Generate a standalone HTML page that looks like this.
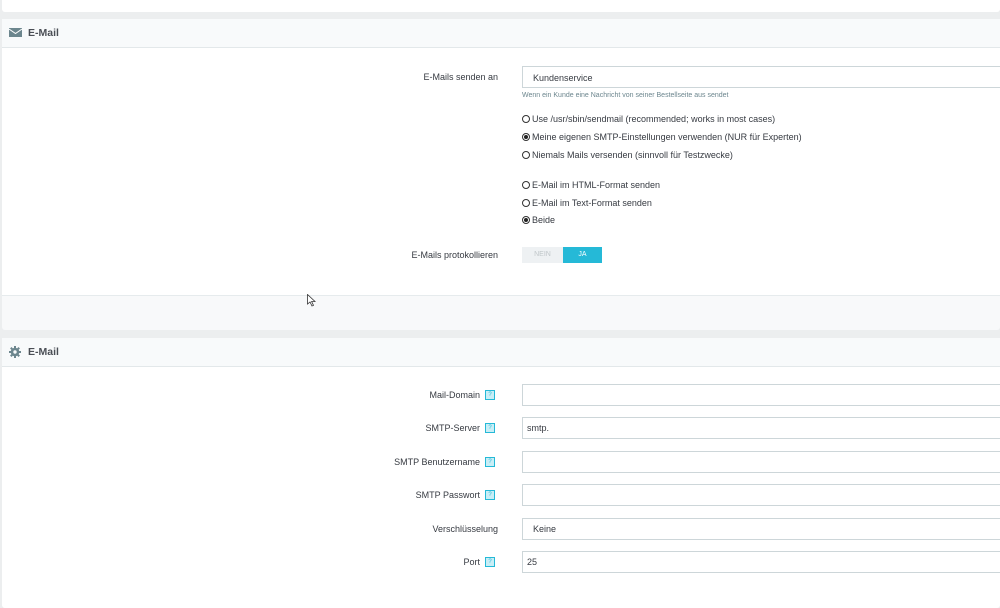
<!DOCTYPE html><html><head><style>
body{margin:0;width:1000px;height:600px;overflow:hidden;background:#eceeef;font-family:"Liberation Sans",sans-serif;font-size:9px;color:#363a41;position:relative}
.a{position:absolute}
.panel{position:absolute;left:2px;right:0;background:#fff;border-radius:3px}
.hd{position:absolute;left:0;right:0;top:0;height:28px;background:#f8fafb;border-bottom:1px solid #e3e8ea}
.hd span{position:absolute;left:26px;top:8px;font-size:10.5px;font-weight:bold;color:#4a4e55}
.lbl{position:absolute;right:502px;text-align:right;font-size:9px;color:#363a41}
.inp{position:absolute;left:522px;width:490px;height:20px;border:1px solid #cdd6d9;background:#fff;box-sizing:border-box}
.inp span{position:absolute;left:10px;top:5px}
.q{position:absolute;left:485px;width:8px;height:8px;border:1px solid #25b9d7;background:#c9eef6;font-size:6px;color:#25b9d7;text-align:center;line-height:8px}
.r{position:absolute;left:522px;font-size:9px}
.r i{display:inline-block;width:6px;height:6px;border:1px solid #333;border-radius:50%;vertical-align:-1px;margin-right:2px;position:relative}
.r i.on:after{content:"";position:absolute;left:1px;top:1px;width:4px;height:4px;border-radius:50%;background:#222}
</style></head><body>
<div class="panel" style="top:-3px;height:15px"></div>
<div class="panel" style="top:19px;height:311px;background:#f8f9fa">
 <div style="position:absolute;left:0;right:0;top:29px;height:247px;background:#fff;border-bottom:1px solid #e6ebed"></div>
 <div class="hd"><svg class="a" style="left:7px;top:9px" width="13" height="9" viewBox="0 0 13 9"><rect width="13" height="9" fill="#6c868e"/><path d="M0 1L6.5 5.5L13 1" stroke="#fff" stroke-width="1" fill="none"/></svg><span>E-Mail</span></div>
</div>
<div class="lbl" style="top:72px">E-Mails senden an</div>
<div class="inp" style="top:66px;height:22px"><span style="top:6px">Kundenservice</span></div>
<div class="a" style="left:522px;top:92px;font-size:7px;color:#6c868e">Wenn ein Kunde eine Nachricht von seiner Bestellseite aus sendet</div>
<div class="r" style="top:114px"><i></i>Use /usr/sbin/sendmail (recommended; works in most cases)</div>
<div class="r" style="top:132px"><i class="on"></i>Meine eigenen SMTP-Einstellungen verwenden (NUR für Experten)</div>
<div class="r" style="top:150px"><i></i>Niemals Mails versenden (sinnvoll für Testzwecke)</div>
<div class="r" style="top:180px"><i></i>E-Mail im HTML-Format senden</div>
<div class="r" style="top:198px"><i></i>E-Mail im Text-Format senden</div>
<div class="r" style="top:215px"><i class="on"></i>Beide</div>
<div class="lbl" style="top:250px">E-Mails protokollieren</div>
<div class="a" style="left:522px;top:247px;width:41px;height:16px;background:#eef1f3;color:#c0c6c9;font-size:7px;text-align:center;line-height:16px">NEIN</div>
<div class="a" style="left:563px;top:247px;width:39px;height:16px;background:#25b9d7;color:#fff;font-size:7px;text-align:center;line-height:16px">JA</div>
<svg class="a" style="left:307px;top:294px" width="9" height="13" viewBox="0 0 9 13"><path d="M0.5 0.5L0.5 10L3 8L5 12L6.5 11.3L4.6 7.5L8 7.5Z" fill="#fff" stroke="#333" stroke-width="0.8"/></svg>
<div class="panel" style="top:338px;height:270px">
 <div class="hd"><svg class="a" style="left:7px;top:8px" width="12" height="12" viewBox="0 0 12 12"><g fill="#6c868e"><circle cx="6" cy="6" r="4.3"/><rect x="5" y="0" width="2" height="12"/><rect x="0" y="5" width="12" height="2"/><rect x="5" y="0" width="2" height="12" transform="rotate(45 6 6)"/><rect x="5" y="0" width="2" height="12" transform="rotate(-45 6 6)"/></g><circle cx="6" cy="6" r="1.7" fill="#f8fafb"/></svg><span style="left:26px">E-Mail</span></div>
</div>
<div class="lbl" style="top:390px;right:520px">Mail-Domain</div><div class="q" style="top:390px">?</div><div class="inp" style="top:384px;height:22px"></div>
<div class="lbl" style="top:423px;right:520px">SMTP-Server</div><div class="q" style="top:423px">?</div><div class="inp" style="top:417px;height:22px"><span style="left:4px">smtp.</span></div>
<div class="lbl" style="top:457px;right:520px">SMTP Benutzername</div><div class="q" style="top:457px">?</div><div class="inp" style="top:451px;height:22px"></div>
<div class="lbl" style="top:490px;right:520px">SMTP Passwort</div><div class="q" style="top:490px">?</div><div class="inp" style="top:484px;height:22px"></div>
<div class="lbl" style="top:524px">Verschlüsselung</div><div class="inp" style="top:518px;height:22px"><span>Keine</span></div>
<div class="lbl" style="top:557px;right:520px">Port</div><div class="q" style="top:557px">?</div><div class="inp" style="top:551px;height:22px"><span style="left:4px">25</span></div>
</body></html>
